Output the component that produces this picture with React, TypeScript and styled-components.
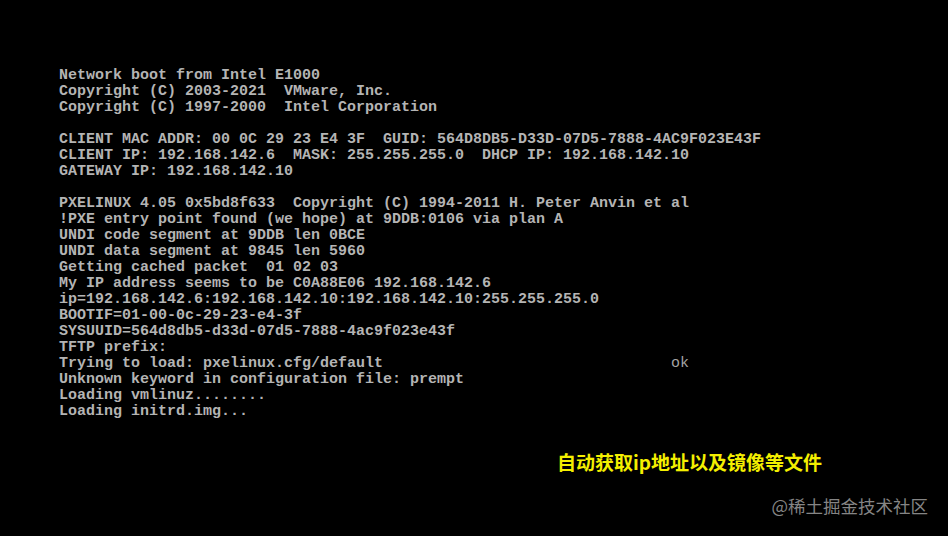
import * as React from 'react'
import styled, { createGlobalStyle } from 'styled-components'

const GlobalStyle = createGlobalStyle`
  html, body {
    margin: 0;
    padding: 0;
    background: #000;
  }
`

const lines: string[] = [
  'Network boot from Intel E1000',
  'Copyright (C) 2003-2021  VMware, Inc.',
  'Copyright (C) 1997-2000  Intel Corporation',
  '',
  'CLIENT MAC ADDR: 00 0C 29 23 E4 3F  GUID: 564D8DB5-D33D-07D5-7888-4AC9F023E43F',
  'CLIENT IP: 192.168.142.6  MASK: 255.255.255.0  DHCP IP: 192.168.142.10',
  'GATEWAY IP: 192.168.142.10',
  '',
  'PXELINUX 4.05 0x5bd8f633  Copyright (C) 1994-2011 H. Peter Anvin et al',
  '!PXE entry point found (we hope) at 9DDB:0106 via plan A',
  'UNDI code segment at 9DDB len 0BCE',
  'UNDI data segment at 9845 len 5960',
  'Getting cached packet  01 02 03',
  'My IP address seems to be C0A88E06 192.168.142.6',
  'ip=192.168.142.6:192.168.142.10:192.168.142.10:255.255.255.0',
  'BOOTIF=01-00-0c-29-23-e4-3f',
  'SYSUUID=564d8db5-d33d-07d5-7888-4ac9f023e43f',
  'TFTP prefix:',
]

const Screen = styled.div`
  width: 948px;
  height: 536px;
  box-sizing: border-box;
  background: #000;
  display: flex;
  flex-direction: column;
  padding-top: 68px;
  overflow: hidden;
`

const Console = styled.pre`
  margin: 0 0 0 59px;
  font-family: 'Liberation Mono', 'DejaVu Sans Mono', monospace;
  font-size: 15px;
  line-height: 16px;
  font-weight: bold;
  color: #b4b4b4;
  white-space: pre;
`

// the "ok" status is printed thinner and dimmer than the rest
const Status = styled.span`
  font-weight: normal;
  color: #a4a4a4;
`

const Caption = styled.div`
  margin: 31px 0 0 557px;
  font-family: 'Noto Sans CJK SC', 'Noto Sans', sans-serif;
  font-size: 19px;
  line-height: 22px;
  font-weight: bold;
  color: #f4ef00;
`

const Watermark = styled.div`
  margin-top: 22px;
  align-self: flex-end;
  padding-right: 20px;
  font-family: 'Noto Sans CJK SC', 'Noto Sans', sans-serif;
  font-size: 17.5px;
  line-height: 22px;
  color: #858585;
`

export default function App() {
  return (
    <>
      <GlobalStyle />
      <Screen>
        <Console>
          {lines.join('\n') + '\n'}
          {'Trying to load: pxelinux.cfg/default'.padEnd(68, ' ')}
          <Status>ok</Status>
          {'\nUnknown keyword in configuration file: prempt\nLoading vmlinuz........\nLoading initrd.img...'}
        </Console>
        <Caption>自动获取ip地址以及镜像等文件</Caption>
        <Watermark>@稀土掘金技术社区</Watermark>
      </Screen>
    </>
  )
}
